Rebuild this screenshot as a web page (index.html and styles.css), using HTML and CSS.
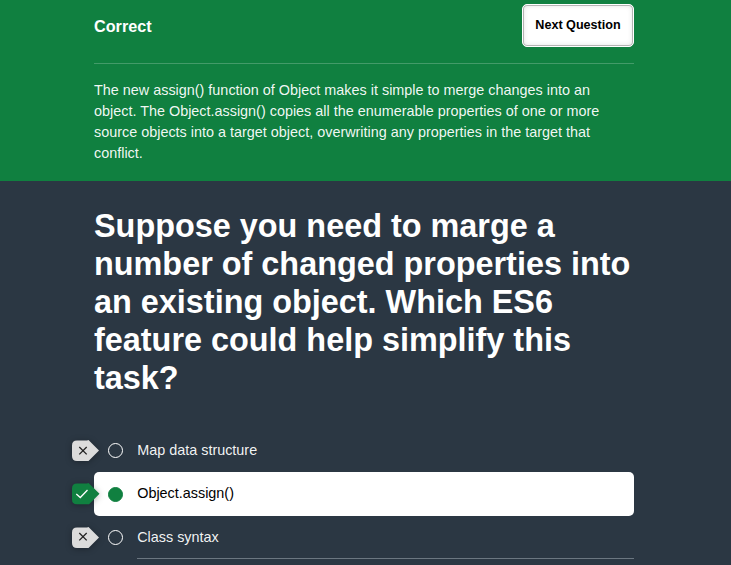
FILE: index.html
```html
<!DOCTYPE html>
<html lang="en">
<head>
<meta charset="utf-8">
<title>Quiz</title>
<link rel="stylesheet" href="styles.css">
</head>
<body>
<section class="feedback">
  <div class="wrap">
    <header class="feedback-head">
      <h2 class="verdict">Correct</h2>
      <button class="next" type="button">Next Question</button>
    </header>
    <p class="explanation">The new assign() function of Object makes it simple to merge changes into an object. The Object.assign() copies all the enumerable properties of one or more source objects into a target object, overwriting any properties in the target that conflict.</p>
  </div>
</section>
<main class="wrap">
  <h1 class="question">Suppose you need to marge a number of changed properties into an existing object. Which ES6 feature could help simplify this task?</h1>
  <ul class="answers">
    <li class="answer">
      <svg class="tag" viewBox="0 0 27 21"><path class="tag-shape" d="M5 .5H15L16.500 0L27 10.500L16.500 21L15 21H5Q0 21 0 16V5.500Q0 .5 5 .5Z"/><path class="mark" d="M7.300 7L14.700 14.400M14.700 7L7.300 14.400"/></svg>
      <span class="radio"></span>
      <span class="label">Map data structure</span>
    </li>
    <li class="answer chosen">
      <svg class="tag right" viewBox="0 0 27 21"><path class="tag-shape" d="M5 .5H15L16.500 0L27.500 10.800L17 21.300H5Q0 21.300 0 16.500V5.500Q0 .5 5 .5Z"/><path class="mark" d="M4.300 11L8.300 14.500L15.500 7"/></svg>
      <span class="radio"></span>
      <span class="label">Object.assign()</span>
    </li>
    <li class="answer underlined">
      <svg class="tag" viewBox="0 0 27 21"><path class="tag-shape" d="M5 .5H15L16.500 0L27 10.500L16.500 21L15 21H5Q0 21 0 16V5.500Q0 .5 5 .5Z"/><path class="mark" d="M7.300 6L14.700 13.400M14.700 6L7.300 13.400"/></svg>
      <span class="radio"></span>
      <span class="label">Class syntax</span>
    </li>
  </ul>
</main>
</body>
</html>
```

FILE: styles.css
```css
* {
  box-sizing: border-box;
}

html,
body {
  height: 100%;
}

body {
  margin: 0;
  overflow: hidden;
  background: #2b3743;
  color: #fff;
  font-family: "Liberation Sans", Arial, sans-serif;
  font-size: 14.4px;
}

.wrap {
  width: 540px;
  margin: 0 auto 0 94px;
}

.feedback {
  height: 181px;
  background: #108040;
}

.feedback-head {
  display: flex;
  justify-content: space-between;
  height: 64px;
  padding-top: 4px;
  border-bottom: 1px solid #439b69;
}

.verdict {
  margin: 0;
  padding-top: 12px;
  font-size: 16.2px;
  line-height: 20px;
}

.next {
  width: 112px;
  height: 43px;
  padding: 0 0 1px;
  border: 1px solid #fff;
  border-radius: 5px;
  background: #fff;
  box-shadow: inset 0 0 0 1px #b4b4b4, inset 0 0 5px 1px #e4e4e4;
  color: #000;
  font: bold 12.6px "Liberation Sans", Arial, sans-serif;
}

.explanation {
  margin: 0;
  padding-top: 16px;
  color: rgba(255, 255, 255, 0.95);
  line-height: 21px;
}

.question {
  margin: 0;
  padding-top: 26px;
  font-size: 32.4px;
  line-height: 38px;
}

.answers {
  margin: 32px 0 0;
  padding: 0;
  list-style: none;
}

.answer {
  position: relative;
  display: flex;
  align-items: center;
  height: 43px;
  padding-left: 14px;
  color: rgba(255, 255, 255, 0.95);
}

.chosen {
  height: 44px;
  border-radius: 5px;
  background: #fff;
  color: #000;
}

.radio {
  width: 15px;
  height: 15px;
  margin-right: 14.2px;
  border: 1px solid #fff;
  border-radius: 50%;
}

.chosen .radio {
  border-color: #108040;
  background: #108040;
}

.label {
  padding-bottom: 2px;
  line-height: 20px;
}

.underlined::after {
  content: "";
  position: absolute;
  right: 0;
  bottom: 0;
  left: 43px;
  border-bottom: 1px solid #6b7680;
}

.tag {
  position: absolute;
  top: 11px;
  left: -22px;
  width: 27px;
  height: 21px;
  overflow: visible;
  filter: drop-shadow(0 1px 3px rgba(0, 0, 0, 0.3));
}

.tag-shape {
  fill: #dcdcdc;
}

.right .tag-shape {
  fill: #108040;
}

.mark {
  fill: none;
  stroke: #222;
  stroke-width: 1.3;
}

.right .mark {
  stroke: #fff;
}
```
